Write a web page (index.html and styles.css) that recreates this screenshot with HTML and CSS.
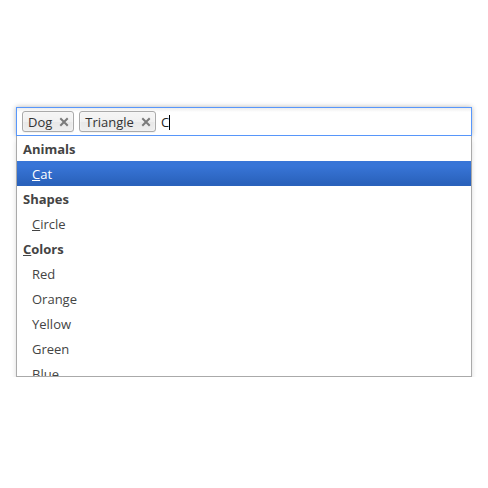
FILE: index.html
```html
<!DOCTYPE html>
<html>
<head>
<meta charset="utf-8">
<link rel="stylesheet" href="styles.css">
</head>
<body>
<div class="chosen">
  <ul class="choices">
    <li class="choice"><span>Dog</span><a class="close"><svg viewBox="0 0 12 12" width="12" height="12"><path d="M3 3 L9 9 M9 3 L3 9" stroke="#7a7a7a" stroke-width="2" stroke-linecap="square"/></svg></a></li>
    <li class="choice"><span>Triangle</span><a class="close"><svg viewBox="0 0 12 12" width="12" height="12"><path d="M3 3 L9 9 M9 3 L3 9" stroke="#7a7a7a" stroke-width="2" stroke-linecap="square"/></svg></a></li>
    <li class="search-field"><span class="typed">C</span></li>
  </ul>
  <div class="drop">
    <ul class="results">
      <li class="group">Animals</li>
      <li class="option highlighted"><em>C</em>at</li>
      <li class="group">Shapes</li>
      <li class="option"><em>C</em>ircle</li>
      <li class="group"><em>C</em>olors</li>
      <li class="option">Red</li>
      <li class="option">Orange</li>
      <li class="option">Yellow</li>
      <li class="option">Green</li>
      <li class="option">Blue</li>
    </ul>
  </div>
</div>
</body>
</html>
```
FILE: styles.css
```css
html, body {
  margin: 0;
  background: #fff;
}
body {
  padding: 107px 16px 0 16px;
  font-family: "Open Sans", "Noto Sans", sans-serif;
  font-size: 13px;
}
.chosen {
  width: 456px;
  position: relative;
}
.choices {
  box-sizing: border-box;
  width: 100%;
  margin: 0;
  padding: 0 5px;
  list-style: none;
  display: flex;
  align-items: flex-start;
  border: 1px solid #5897fb;
  background-color: #fff;
  background-image: linear-gradient(#eee 1%, #fff 15%);
  box-shadow: 0 0 5px rgba(0, 0, 0, 0.3);
}
.choice {
  position: relative;
  margin: 3px 5px 3px 0;
  padding: 4px 21px 2px 5px;
  border: 1px solid #aaa;
  border-radius: 3px;
  background-color: #eee;
  background-image: linear-gradient(#f4f4f4 20%, #f0f0f0 50%, #e8e8e8 52%, #eee 100%);
  box-shadow: 0 0 2px #fff inset, 0 1px 0 rgba(0, 0, 0, 0.05);
  color: #333;
  line-height: 13px;
}
.close {
  position: absolute;
  top: 4px;
  right: 3px;
  width: 12px;
  height: 12px;
  display: block;
}
.close svg {
  display: block;
}
.search-field {
  height: 27px;
  display: flex;
  align-items: center;
  padding-top: 1px;
  box-sizing: border-box;
}
.typed {
  color: #222;
  line-height: 15px;
  border-right: 1px solid #000;
}
.drop {
  border: 1px solid #aaa;
  border-top: 0;
  background: #fff;
  box-shadow: 0 4px 5px rgba(0, 0, 0, 0.15);
}
.results {
  margin: 0;
  padding: 0;
  list-style: none;
  max-height: 240px;
  overflow: hidden;
  color: #444;
}
.results li {
  margin: 0;
  padding: 6px 6px 4px 6px;
  line-height: 15px;
}
.results li.group {
  font-weight: bold;
}
.results li.option {
  padding-left: 15px;
}
.results li.highlighted {
  background-color: #3875d7;
  background-image: linear-gradient(#3875d7 20%, #2a62bc 90%);
  color: #fff;
}
.results em {
  font-style: normal;
  text-decoration: underline;
}
```
